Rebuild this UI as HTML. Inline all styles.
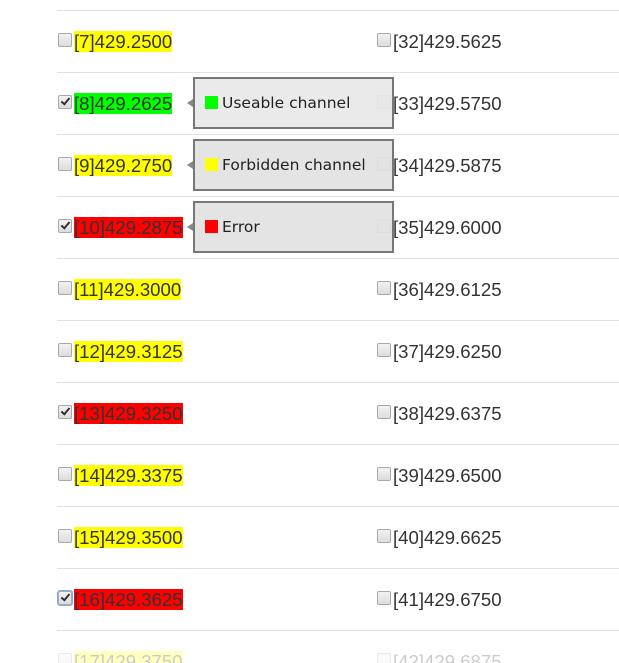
<!DOCTYPE html>
<html><head><meta charset="utf-8"><style>
html,body{margin:0;padding:0;background:#fff;width:619px;height:663px;overflow:hidden;position:relative;font-family:"Liberation Sans",Arial,sans-serif;}
.line{position:absolute;left:57px;right:0;height:1px;background:#e2e2e2;}
.cb{position:absolute;width:12px;height:12px;border:1px solid #a9a9a9;border-radius:2px;background:linear-gradient(#f3f3f3,#dcdcdc);}
.cb.on::after{content:"";position:absolute;left:4px;top:0px;width:3px;height:7px;border:solid #333;border-width:0 2px 2px 0;transform:rotate(40deg);}
.t{position:absolute;font-size:18.6px;line-height:20px;color:#333;white-space:nowrap;padding-top:1px;}
.y{background:#ffff00}.g{background:#00ff00}.r{background:#ff0000}
.tip{position:absolute;left:193px;width:197px;height:48px;border:2px solid #777;background:rgba(226,226,226,0.93);font-family:"DejaVu Sans",sans-serif;font-size:15.5px;color:#222;}
.tip .sq{position:absolute;left:10px;top:17px;width:13px;height:13px;}
.tip .lb{position:absolute;left:27px;top:15px;}
.arr{position:absolute;left:-8px;top:20px;width:0;height:0;border-top:4px solid transparent;border-bottom:4px solid transparent;border-right:6px solid #888;}
.fade{position:absolute;left:0;right:0;top:640px;bottom:0;background:rgba(255,255,255,0.75);}
</style></head><body>
<div class="line" style="top:10px"></div>
<div class="line" style="top:72px"></div>
<div class="line" style="top:134px"></div>
<div class="line" style="top:196px"></div>
<div class="line" style="top:258px"></div>
<div class="line" style="top:320px"></div>
<div class="line" style="top:382px"></div>
<div class="line" style="top:444px"></div>
<div class="line" style="top:506px"></div>
<div class="line" style="top:568px"></div>
<div class="line" style="top:630px"></div>

<div class="cb" style="left:58px;top:33px"></div><div class="t y" style="left:74px;top:31px">[7]429.2500</div>
<div class="cb" style="left:377px;top:33px"></div><div class="t" style="left:393px;top:31px">[32]429.5625</div>

<div class="cb on" style="left:58px;top:95px"></div><div class="t g" style="left:74px;top:93px">[8]429.2625</div>
<div class="cb" style="left:377px;top:95px"></div><div class="t" style="left:393px;top:93px">[33]429.5750</div>

<div class="cb" style="left:58px;top:157px"></div><div class="t y" style="left:74px;top:155px">[9]429.2750</div>
<div class="cb" style="left:377px;top:157px"></div><div class="t" style="left:393px;top:155px">[34]429.5875</div>

<div class="cb on" style="left:58px;top:219px"></div><div class="t r" style="left:74px;top:217px">[10]429.2875</div>
<div class="cb" style="left:377px;top:219px"></div><div class="t" style="left:393px;top:217px">[35]429.6000</div>

<div class="cb" style="left:58px;top:281px"></div><div class="t y" style="left:74px;top:279px">[11]429.3000</div>
<div class="cb" style="left:377px;top:281px"></div><div class="t" style="left:393px;top:279px">[36]429.6125</div>

<div class="cb" style="left:58px;top:343px"></div><div class="t y" style="left:74px;top:341px">[12]429.3125</div>
<div class="cb" style="left:377px;top:343px"></div><div class="t" style="left:393px;top:341px">[37]429.6250</div>

<div class="cb on" style="left:58px;top:405px"></div><div class="t r" style="left:74px;top:403px">[13]429.3250</div>
<div class="cb" style="left:377px;top:405px"></div><div class="t" style="left:393px;top:403px">[38]429.6375</div>

<div class="cb" style="left:58px;top:467px"></div><div class="t y" style="left:74px;top:465px">[14]429.3375</div>
<div class="cb" style="left:377px;top:467px"></div><div class="t" style="left:393px;top:465px">[39]429.6500</div>

<div class="cb" style="left:58px;top:529px"></div><div class="t y" style="left:74px;top:527px">[15]429.3500</div>
<div class="cb" style="left:377px;top:529px"></div><div class="t" style="left:393px;top:527px">[40]429.6625</div>

<div class="cb on" style="left:58px;top:591px;box-shadow:0 0 0 1px #7aaef0"></div><div class="t r" style="left:74px;top:589px">[16]429.3625</div>
<div class="cb" style="left:377px;top:591px"></div><div class="t" style="left:393px;top:589px">[41]429.6750</div>

<div class="cb" style="left:58px;top:653px"></div><div class="t y" style="left:74px;top:651px">[17]429.3750</div>
<div class="cb" style="left:377px;top:653px"></div><div class="t" style="left:393px;top:651px">[42]429.6875</div>
<div class="fade"></div>

<div class="tip" style="top:77px;background:rgba(232,232,232,0.93)"><div class="arr"></div><div class="sq" style="background:#00ff00"></div><div class="lb">Useable channel</div></div>
<div class="tip" style="top:139px"><div class="arr"></div><div class="sq" style="background:#ffff00"></div><div class="lb">Forbidden channel</div></div>
<div class="tip" style="top:201px"><div class="arr"></div><div class="sq" style="background:#ff0000"></div><div class="lb">Error</div></div>
</body></html>
